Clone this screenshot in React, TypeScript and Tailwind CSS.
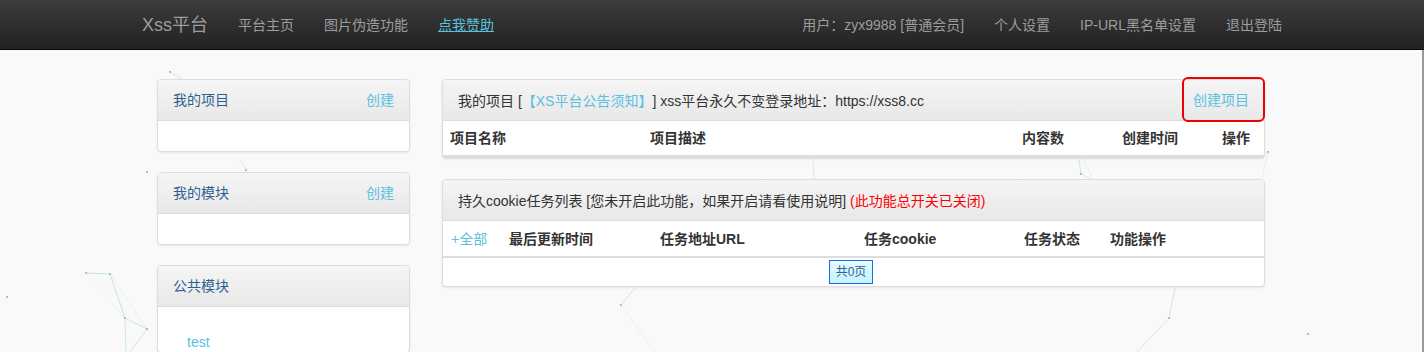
import React from "react";

const FONT = { fontFamily: '"Liberation Sans", "Noto Sans CJK SC", sans-serif' };
const CJK = { fontFamily: '"Noto Sans CJK SC", sans-serif' };

function Particles() {
  const lines: [number, number, number, number, number][] = [
    [170, 72, 182, 79, 0.7],
    [240, 160, 246, 170, 0.6],
    [813, 158, 814, 180, 0.6],
    [1079, 160, 1081, 174, 0.8],
    [1081, 174, 1092, 180, 0.6],
    [1083, 158, 1092, 178, 0.4],
    [1268, 152, 1262, 178, 0.4],
    [1175, 288, 1169, 318, 0.8],
    [1169, 318, 1137, 352, 0.7],
    [86, 273, 110, 274, 0.9],
    [110, 274, 125, 318, 0.9],
    [125, 318, 147, 329, 0.9],
    [86, 273, 125, 318, 0.3],
    [110, 274, 147, 329, 0.3],
    [147, 329, 130, 352, 0.8],
    [125, 318, 126, 352, 0.8],
    [635, 288, 621, 305, 0.8],
    [621, 305, 655, 352, 0.3],
  ];
  const dots: [number, number][] = [
    [170, 72], [246, 170], [147, 172], [1081, 174], [1268, 152], [1169, 318],
    [1308, 334], [86, 273], [110, 274], [125, 318], [147, 329], [7, 297], [621, 305],
  ];
  return (
    <svg className="pointer-events-none absolute left-0 top-0" width="1424" height="352">
      {lines.map(([x1, y1, x2, y2, o], i) => (
        <line key={i} x1={x1} y1={y1} x2={x2} y2={y2} stroke="#bfe3d6" strokeOpacity={o} strokeWidth="1" />
      ))}
      {dots.map(([x, y], i) => (
        <rect key={i} x={x - 1} y={y - 1} width="2" height="2" fill="#bbbbbb" />
      ))}
    </svg>
  );
}

function SidePanel({ title, action, children }: { title: string; action?: string; children?: React.ReactNode }) {
  return (
    <div className="mb-[20px] overflow-hidden rounded-[4px] border border-[#dddddd] bg-white shadow-[0_1px_2px_rgba(0,0,0,0.08)]">
      <div className="flex h-[41px] items-center justify-between border-b border-[#dddddd] bg-gradient-to-b from-[#f5f5f5] to-[#e8e8e8] px-[15px] text-[14px] leading-[20px]">
        <span className="text-[#2d5f93]">{title}</span>
        {action && <span className="text-[#5bc0de]">{action}</span>}
      </div>
      <div className="min-h-[30px] px-[15px]">{children}</div>
    </div>
  );
}

export default function App() {
  return (
    <div
      className="relative h-[352px] w-[1424px] overflow-hidden bg-[#f9f9f9] text-[#333] [text-spacing-trim:space-all]"
      style={FONT}
    >
      <Particles />
      {/* navbar */}
      <div className="relative h-[50px] border-b border-[#080808] bg-gradient-to-b from-[#3c3c3c] to-[#222222]">
        <div className="mx-auto flex h-[49px] w-[1140px] items-center justify-between text-[14px] leading-[20px] text-[#9d9d9d]">
          <div className="flex items-center">
            <span className="pr-[15px] text-[18px]">Xss平台</span>
            <span className="px-[15px]">平台主页</span>
            <span className="px-[15px]">图片伪造功能</span>
            <span className="px-[15px] text-[#5bc0de] underline">点我赞助</span>
          </div>
          <div className="flex items-center">
            <span className="px-[15px]">
              用户<span style={CJK}>：</span>zyx9988 [普通会员]
            </span>
            <span className="px-[15px]">个人设置</span>
            <span className="px-[15px]">IP-URL黑名单设置</span>
            <span className="pl-[15px]">退出登陆</span>
          </div>
        </div>
      </div>

      {/* body */}
      <div className="relative h-[302px] border-r-2 border-[#9a9a9a]">
        <div className="mx-auto flex w-[1108px] gap-[32px] pt-[29px] text-[14px] leading-[20px]">
          {/* left column */}
          <div className="w-[253px] shrink-0">
            <SidePanel title="我的项目" action="创建" />
            <SidePanel title="我的模块" action="创建" />
            <SidePanel title="公共模块">
              <div className="pl-[14px] pt-[25px] text-[#5bc0de]">test</div>
            </SidePanel>
          </div>

          {/* right column */}
          <div className="flex-1">
            <div className="mb-[21px] rounded-[4px] border border-[#dddddd] bg-white shadow-[0_1px_2px_rgba(0,0,0,0.12)]">
              <div className="flex h-[41px] items-center justify-between rounded-t-[4px] border-b border-[#dddddd] bg-gradient-to-b from-[#f5f5f5] to-[#e8e8e8] px-[15px]">
                <span>
                  我的项目 [
                  <span className="text-[#5bc0de]">
                    <span style={CJK}>【</span>XS平台公告须知<span style={CJK}>】</span>
                  </span>
                  ] xss平台永久不变登录地址<span style={CJK}>：</span>https://xss8.cc
                </span>
                <span className="relative text-[#5bc0de]">
                  创建项目
                  <span className="absolute -bottom-[12px] -left-[11px] -right-[16px] -top-[13px] rounded-[6px] border-2 border-[#ee0000]" />
                </span>
              </div>
              <div className="flex h-[36px] items-center border-b-2 border-[#dddddd] pl-[7px] font-bold">
                <div className="w-[200px]">项目名称</div>
                <div className="w-[372px]">项目描述</div>
                <div className="w-[100px]">内容数</div>
                <div className="w-[100px]">创建时间</div>
                <div className="flex-1">操作</div>
              </div>
            </div>

            <div className="rounded-[4px] border border-[#dddddd] bg-white shadow-[0_1px_2px_rgba(0,0,0,0.08)]">
              <div className="flex h-[41px] items-center rounded-t-[4px] border-b border-[#dddddd] bg-gradient-to-b from-[#f5f5f5] to-[#e8e8e8] px-[15px]">
                <span>
                  持久cookie任务列表 [您未开启此功能<span style={CJK}>，</span>如果开启请看使用说明]{" "}
                  <span className="text-[#ff0000]">(此功能总开关已关闭)</span>
                </span>
              </div>
              <div className="flex h-[37px] items-center border-b-2 border-[#dddddd] pl-[8px] font-bold">
                <div className="w-[58px] font-normal text-[#5bc0de]">+全部</div>
                <div className="w-[151px]">最后更新时间</div>
                <div className="w-[204px]">任务地址URL</div>
                <div className="w-[160px]">任务cookie</div>
                <div className="w-[86px]">任务状态</div>
                <div className="flex-1">功能操作</div>
              </div>
              <div className="flex h-[28px] items-center justify-center">
                <span className="-ml-[5px] flex h-[24px] w-[44px] items-center justify-center border border-[#1a6cf0] bg-gradient-to-b from-[#e6fbff] to-[#c4f3ff] text-[12px] text-[#2a6496]">
                  共0页
                </span>
              </div>
            </div>
          </div>
        </div>
      </div>
    </div>
  );
}
